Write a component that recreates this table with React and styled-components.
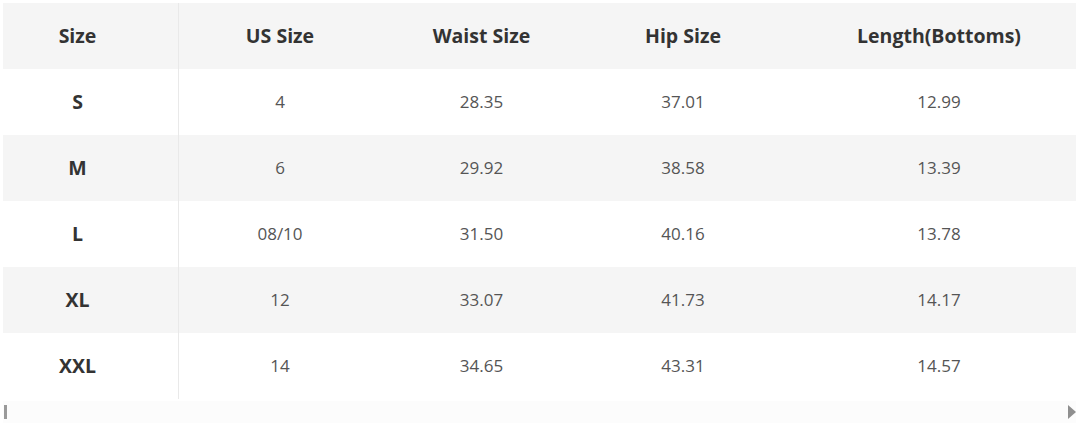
import styled, { createGlobalStyle } from "styled-components"

const Global = createGlobalStyle`
  body {
    margin: 0;
    background: #fff;
    font-family: "Open Sans", "Noto Sans", sans-serif;
  }
`

const Wrap = styled.div`
  width: 1080px;
  height: 423px;
  padding: 3px 4px 0 3px;
  box-sizing: border-box;
  display: flex;
  flex-direction: column;
`

const Table = styled.div`
  display: grid;
  grid-template-columns: 176px 202px 201px 202px 1fr;
  grid-auto-rows: 66px;
`

const Row = styled.div`
  display: contents;
`

const Cell = styled.div`
  display: flex;
  align-items: center;
  justify-content: center;
  font-size: ${(p) => (p.$bold ? "19.5px" : "17px")};
  color: ${(p) => (p.$head ? "#333" : "#555")};
  font-weight: ${(p) => (p.$bold ? 700 : 400)};
  background: ${(p) => (p.$shade ? "#f5f5f5" : "#fff")};
  border-right: ${(p) => (p.$divider ? "1px solid #e9e9e9" : "none")};
  padding: ${(p) => p.$pad || "0"};
  padding-bottom: 2px;
`

const Scroll = styled.div`
  height: 22px;
  margin-top: 2px;
  display: flex;
  align-items: center;
  justify-content: space-between;
  background: #fcfcfc;
`

const LeftArrow = styled.div`
  width: 3px;
  height: 14px;
  background: #9a9a9a;
  margin-left: 1px;
`

const RightArrow = styled.div`
  width: 0;
  height: 0;
  border-top: 7px solid transparent;
  border-bottom: 7px solid transparent;
  border-left: 8px solid #8f8f8f;
`

const headers = ["Size", "US Size", "Waist Size", "Hip Size", "Length(Bottoms)"]

const rows = [
  ["S", "4", "28.35", "37.01", "12.99"],
  ["M", "6", "29.92", "38.58", "13.39"],
  ["L", "08/10", "31.50", "40.16", "13.78"],
  ["XL", "12", "33.07", "41.73", "14.17"],
  ["XXL", "14", "34.65", "43.31", "14.57"],
]

const pads = ["0 26px 0 0", "0", "0", "0", "0 0 0 18px"]

const App = () => {
  return (
    <Wrap>
      <Global />
      <Table>
        <Row>
          {headers.map((h, i) => (
            <Cell key={h} $head $bold $shade $divider={i === 0} $pad={pads[i]}>
              {h}
            </Cell>
          ))}
        </Row>
        {rows.map((r, ri) => (
          <Row key={r[0]}>
            {r.map((v, i) => (
              <Cell
                key={i}
                $head={i === 0}
                $bold={i === 0}
                $shade={ri % 2 === 1}
                $divider={i === 0}
                $pad={pads[i]}
              >
                {v}
              </Cell>
            ))}
          </Row>
        ))}
      </Table>
      <Scroll>
        <LeftArrow />
        <RightArrow />
      </Scroll>
    </Wrap>
  )
}

export default App
